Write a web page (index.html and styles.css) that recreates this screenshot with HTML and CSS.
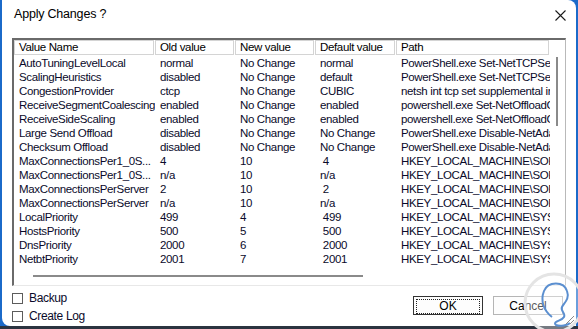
FILE: index.html
```html
<!DOCTYPE html>
<html lang="en">
  <head>
    <meta charset="UTF-8" />
    <meta name="viewport" content="width=device-width, initial-scale=1.0" />
    <title>Apply Changes ?</title>
    <link rel="stylesheet" href="styles.css">
  </head>
  <body>
    <div class="janela">
      <div class="titulo">
        <span>Apply Changes ?</span>
        <svg class="fechar" width="11" height="11" viewBox="0 0 11 11">
          <path d="M0.5 0.5L10.5 10.5M10.5 0.5L0.5 10.5" stroke="#1a1a1a" stroke-width="1.1" fill="none" />
        </svg>
      </div>

      <div class="lista">
        <div class="grade cabecalho">
          <div class="th"><span>Value Name</span></div>
          <div class="th"><span>Old value</span></div>
          <div class="th"><span>New value</span></div>
          <div class="th"><span>Default value</span></div>
          <div class="th"><span>Path</span></div>
        </div>
        <div id="corpo" class="corpo"></div>
        <div class="barra-v"></div>
        <div class="barra-h"></div>
      </div>

      <div class="rodape">
        <div class="opcoes">
          <label class="opcao"><span class="caixa"></span>Backup</label>
          <label class="opcao"><span class="caixa"></span>Create Log</label>
        </div>
        <div class="botoes">
          <button class="botao foco"><span>OK</span></button>
          <button class="botao"><span>Cancel</span></button>
        </div>
      </div>

      <svg class="marca" width="64" height="64" viewBox="0 0 64 64">
        <circle cx="32" cy="32" r="29" fill="rgba(255,255,255,0.35)" stroke="#e4e4e4" stroke-width="3" />
        <path d="M30 46 C22 40 18 30 22 20 C26 10 42 10 45 20 C48 28 42 32 40 36 C38 40 44 42 42 46 C40 50 30 50 34 54 C38 56 46 54 48 52" stroke="#5b8fd0" stroke-width="2" fill="none" />
      </svg>
      <svg class="alca" width="10" height="10" viewBox="0 0 10 10">
        <path d="M1 9L9 1M5 9L9 5" stroke="#8a8a8a" stroke-width="1" />
      </svg>
    </div>
    <div class="base"></div>

    <script>
      var dados = [
        ["AutoTuningLevelLocal", "normal", "No Change", "normal", "PowerShell.exe Set-NetTCPSetting"],
        ["ScalingHeuristics", "disabled", "No Change", "default", "PowerShell.exe Set-NetTCPSetting"],
        ["CongestionProvider", "ctcp", "No Change", "CUBIC", "netsh int tcp set supplemental internet"],
        ["ReceiveSegmentCoalescing", "enabled", "No Change", "enabled", "powershell.exe Set-NetOffloadGlobalSetting"],
        ["ReceiveSideScaling", "enabled", "No Change", "enabled", "powershell.exe Set-NetOffloadGlobalSetting"],
        ["Large Send Offload", "disabled", "No Change", "No Change", "PowerShell.exe Disable-NetAdapterLso"],
        ["Checksum Offload", "disabled", "No Change", "No Change", "PowerShell.exe Disable-NetAdapterChecksumOffload"],
        ["MaxConnectionsPer1_0S...", "4", "10", " 4", "HKEY_LOCAL_MACHINE\\SOFTWARE"],
        ["MaxConnectionsPer1_0S...", "n/a", "10", "n/a", "HKEY_LOCAL_MACHINE\\SOFTWARE"],
        ["MaxConnectionsPerServer", "2", "10", " 2", "HKEY_LOCAL_MACHINE\\SOFTWARE"],
        ["MaxConnectionsPerServer", "n/a", "10", "n/a", "HKEY_LOCAL_MACHINE\\SOFTWARE"],
        ["LocalPriority", "499", "4", " 499", "HKEY_LOCAL_MACHINE\\SYSTEM"],
        ["HostsPriority", "500", "5", " 500", "HKEY_LOCAL_MACHINE\\SYSTEM"],
        ["DnsPriority", "2000", "6", " 2000", "HKEY_LOCAL_MACHINE\\SYSTEM"],
        ["NetbtPriority", "2001", "7", " 2001", "HKEY_LOCAL_MACHINE\\SYSTEM"]
      ];

      var corpo = document.getElementById("corpo");
      dados.forEach(function (linha) {
        var html = '<div class="grade linha">';
        linha.forEach(function (valor) {
          html += '<div class="td">' + valor + "</div>";
        });
        corpo.innerHTML += html + "</div>";
      });
    </script>
  </body>
</html>
```

FILE: styles.css
```css
html,
body {
  margin: 0;
  height: 100%;
}
body {
  background: #1b6ac9;
  font-family: "Liberation Sans", Arial, sans-serif;
  font-size: 11.5px;
  letter-spacing: -0.35px;
  color: #000;
  overflow: hidden;
  position: relative;
}
.janela {
  position: relative;
  margin-left: 2px;
  width: 574px;
  height: 326px;
  background: #fff;
  border-radius: 0 8px 0 8px;
  box-sizing: border-box;
  padding: 0 10px 0 10px;
}
.base {
  height: 3px;
  background: #2b3440;
}
.titulo {
  height: 38px;
  display: flex;
  align-items: flex-start;
  justify-content: space-between;
  padding: 7px 0 0 2px;
  box-sizing: border-box;
  font-size: 12.5px;
  letter-spacing: -0.2px;
}
.fechar {
  margin-top: 3px;
}
.lista {
  position: relative;
  height: 248px;
  width: 554px;
  box-sizing: border-box;
  border-top: 2px solid #6a6a6a;
  border-left: 2px solid #6a6a6a;
  border-right: 1px solid #b9b9b9;
  border-bottom: 1px solid #e8e8e8;
  overflow: hidden;
}
.grade {
  display: grid;
  grid-template-columns: 141px 80px 80px 81px 154px;
  width: 536px;
  overflow: hidden;
}
.cabecalho {
  height: 16px;
}
.th {
  padding: 0 1px 1px 0;
  overflow: hidden;
}
.th span {
  display: block;
  height: 13px;
  line-height: 13px;
  border: 1px solid #d4d4d4;
  padding-left: 4px;
  white-space: nowrap;
  overflow: hidden;
}
.linha {
  height: 14px;
  line-height: 14px;
  color: #0a0a2a;
}
.td {
  padding-left: 5px;
  white-space: pre;
  overflow: hidden;
}
.barra-v {
  position: absolute;
  left: 542px;
  top: 17px;
  width: 2px;
  height: 69px;
  background: #8a8a8a;
}
.barra-h {
  position: absolute;
  left: 19px;
  top: 235px;
  width: 330px;
  height: 2px;
  background: #8a8a8a;
}
.rodape {
  display: flex;
  justify-content: space-between;
  padding-top: 6px;
}
.opcoes {
  display: flex;
  flex-direction: column;
  gap: 6px;
}
.opcao {
  display: flex;
  align-items: center;
  gap: 6px;
  height: 12px;
  font-size: 12px;
  color: #0a0a2a;
}
.caixa {
  width: 9px;
  height: 9px;
  border: 1px solid #5c5c5c;
  background: #fff;
}
.botoes {
  display: flex;
  gap: 10px;
  padding-top: 4px;
  padding-right: 3px;
}
.botao {
  width: 70px;
  height: 19px;
  padding: 2px;
  border: 1px solid #b5b5b5;
  background: #fdfdfd;
  font-family: "Liberation Sans", Arial, sans-serif;
  font-size: 12px;
  color: #000;
}
.botao span {
  display: block;
  height: 13px;
  line-height: 13px;
  border: 1px dotted transparent;
}
.botao.foco {
  border-color: #333;
}
.botao.foco span {
  border-color: #222;
}
.marca {
  position: absolute;
  left: 520px;
  top: 271px;
}
.alca {
  position: absolute;
  right: 1px;
  bottom: 1px;
}
```
